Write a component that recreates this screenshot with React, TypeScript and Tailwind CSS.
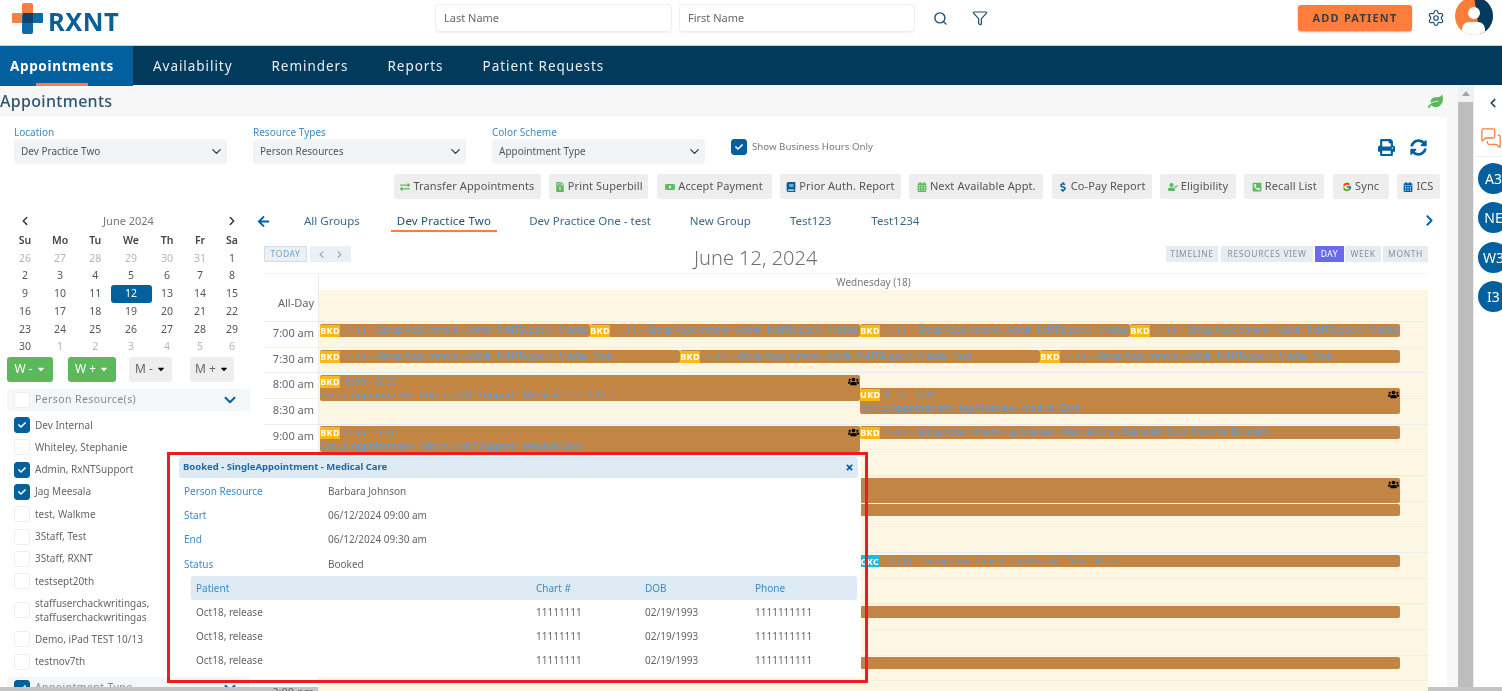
import React from "react";
import { Search, Funnel, Settings, MessagesSquare, ChevronLeft, ChevronRight, ChevronDown } from "lucide-react";
import { FaPrint, FaSyncAlt, FaLeaf, FaExchangeAlt, FaFileInvoiceDollar, FaMoneyBill, FaBook, FaCalendarAlt, FaDollarSign, FaUserCheck, FaPhoneSquareAlt, FaUsers, FaArrowLeft, FaCheck, FaTimes, FaCaretDown } from "react-icons/fa";
import { FcGoogle } from "react-icons/fc";

const Check = ({ on = true, cls = "" }: { on?: boolean; cls?: string }) => (
  <span className={`flex h-[16px] w-[16px] shrink-0 items-center justify-center rounded-[3px] border ${on ? "border-[#03609f] bg-[#03609f]" : "border-[#eeeeee] bg-white"} ${cls}`}>
    {on && <FaCheck className="text-[8px] text-white" />}
  </span>
);

const Select = ({ label, value }: { label: string; value: string }) => (
  <div className="w-[213px]">
    <div className="h-[13px] text-[10px] leading-[12px] text-[#3d8cc4]">{label}</div>
    <div className="flex h-[25px] items-center justify-between rounded-[4px] bg-[#f2f3f4] pl-[7px] pr-[3px] text-[10px] text-[#555]">
      <span>{value}</span>
      <ChevronDown size={15} className="text-[#333]" />
    </div>
  </div>
);

const tools = [
  { t: "Transfer Appointments", i: <FaExchangeAlt className="text-[#5cb85c]" />, w: "w-[147px]" },
  { t: "Print Superbill", i: <FaFileInvoiceDollar className="text-[#5cb85c]" />, w: "w-[99px]" },
  { t: "Accept Payment", i: <FaMoneyBill className="text-[#5cb85c]" />, w: "w-[115px]" },
  { t: "Prior Auth. Report", i: <FaBook className="text-[#03609f]" />, w: "w-[121px]" },
  { t: "Next Available Appt.", i: <FaCalendarAlt className="text-[#5cb85c]" />, w: "w-[134px]" },
  { t: "Co-Pay Report", i: <FaDollarSign className="text-[#03609f]" />, w: "w-[100px]" },
  { t: "Eligibility", i: <FaUserCheck className="text-[#5cb85c]" />, w: "w-[76px]" },
  { t: "Recall List", i: <FaPhoneSquareAlt className="text-[#5cb85c]" />, w: "w-[80px]" },
  { t: "Sync", i: <FcGoogle />, w: "w-[56px]" },
  { t: "ICS", i: <FaCalendarAlt className="text-[#03609f]" />, w: "w-[43px]" },
];

const days = [
  ["26", "27", "28", "29", "30", "31", "1"],
  ["2", "3", "4", "5", "6", "7", "8"],
  ["9", "10", "11", "12", "13", "14", "15"],
  ["16", "17", "18", "19", "20", "21", "22"],
  ["23", "24", "25", "26", "27", "28", "29"],
  ["30", "1", "2", "3", "4", "5", "6"],
];

const people: [string, boolean][] = [
  ["Dev Internal", true],
  ["Whiteley, Stephanie", false],
  ["Admin, RxNTSupport", true],
  ["Jag Meesala", true],
  ["test, Walkme", false],
  ["3Staff, Test", false],
  ["3Staff, RXNT", false],
  ["testsept20th", false],
];

const times = ["7:00 am", "7:30 am", "8:00 am", "8:30 am", "9:00 am", "9:30 am", "10:00 am", "10:30 am", "11:00 am", "11:30 am", "12:00 pm", "12:30 pm", "1:00 pm", "1:30 pm", "2:00 pm"];
const strong = [0, 2, 4, 6, 9, 11, 13];

const Badge = ({ t, c = "bg-[#fdb913]" }: { t: string; c?: string }) => (
  <span className={`mr-[5px] inline-block h-[12px] w-[20px] shrink-0 rounded-[1px] text-center text-[9px] font-bold leading-[12px] tracking-[0.4px] text-white ${c}`}>{t}</span>
);

const Ev = ({ cls, children }: { cls: string; children?: React.ReactNode }) => (
  <div className={`absolute overflow-hidden whitespace-nowrap rounded-[2px] bg-[#c38543] text-[9.7px] leading-[13px] text-[#5f9bd6] ${cls}`}>{children}</div>
);

const Line = ({ b = "BKD", c, time, text }: { b?: string; c?: string; time: string; text?: string }) => (
  <div className="flex h-[13px] items-center">
    <Badge t={b} c={c} />
    <span className="text-[9.5px] tracking-[0.6px]">{time}</span>
    {text && <span className="ml-[4px] text-[8.7px]">-</span>}
    {text && <span className="ml-[4px] text-[8.7px]">{text}</span>}
  </div>
);

const rows = [
  ["Person Resource", "Barbara Johnson"],
  ["Start", "06/12/2024 09:00 am"],
  ["End", "06/12/2024 09:30 am"],
  ["Status", "Booked"],
];

export default function App() {
  return (
    <div className="relative flex h-[691px] w-[1502px] flex-col overflow-hidden bg-white font-['Lato','Noto_Sans',sans-serif] text-[#555] blur-[0.35px]">
      {/* header */}
      <header className="relative flex h-[45px] shrink-0 items-center">
        <div className="ml-[12px] flex items-center">
          <svg width="31" height="31" viewBox="0 0 31 31" className="-mt-[9px]">
            <rect x="10" y="0" width="11" height="20" rx="2" fill="#f6803c" />
            <rect x="0" y="10" width="20" height="10" rx="1" fill="#f6803c" />
            <rect x="11" y="10" width="20" height="10" rx="1" fill="#0c6aa6" />
            <rect x="10" y="11" width="11" height="20" rx="2" fill="#0c6aa6" />
            <rect x="11" y="10" width="10" height="10" fill="#10406b" />
          </svg>
          <span className="ml-[5px] -mt-[2px] text-[25.5px] font-bold leading-none tracking-[0.5px] text-[#0c5f96] font-['Open_Sans',sans-serif]">RXNT</span>
        </div>
        <div className="absolute left-[435px] top-[4px] flex items-center gap-[7px]">
          <div className="flex h-[28px] w-[237px] items-center rounded-[4px] border border-[#efefef] pl-[8px] text-[11px] text-[#666] shadow-[0_1px_1px_rgba(0,0,0,0.06)]">Last Name</div>
          <div className="flex h-[28px] w-[236px] items-center rounded-[4px] border border-[#efefef] pl-[8px] text-[11px] text-[#666] shadow-[0_1px_1px_rgba(0,0,0,0.06)]">First Name</div>
          <Search size={15} strokeWidth={2.2} className="ml-[11px] text-[#1d4f70]" />
          <Funnel size={16} strokeWidth={1.8} className="ml-[17px] text-[#1d4f70]" />
        </div>
        <button className="absolute left-[1298px] top-[5px] h-[26px] w-[114px] rounded-[3px] bg-[#fe7d3a] text-[11px] font-bold tracking-[1.2px] text-[#3d3d3d] shadow-[0_1px_2px_rgba(0,0,0,0.3)]">ADD PATIENT</button>
        <Settings size={18} strokeWidth={1.6} className="absolute left-[1427px] top-[9px] text-[#1d4f70]" />
        <svg width="38" height="36" viewBox="0 0 38 36" className="absolute left-[1455px] top-0">
          <defs><clipPath id="cp"><circle cx="19" cy="16" r="19" /></clipPath></defs>
          <g clipPath="url(#cp)">
            <rect x="0" y="-4" width="38" height="40" fill="#fe7d3a" />
            <path d="M19 -4 h20 v40 h-14 z" fill="#023a5c" />
            <circle cx="19" cy="13" r="6" fill="#fff" />
            <rect x="7" y="22" width="23" height="16" rx="7" fill="#fff" />
          </g>
        </svg>
      </header>

      {/* nav */}
      <nav className="flex h-[40px] shrink-0 items-center border-t border-[#c5d3dc] bg-[#023a5c] pt-[2px] text-[13.5px] tracking-[0.95px] text-[#e8eef2]">
        <div className="relative -mt-[2px] flex h-[40px] w-[133px] items-center bg-[#03609f] pl-[10px] pt-[2px] font-bold tracking-[0.65px] text-white">
          Appointments
          <span className="absolute bottom-0 left-[36px] h-[3px] w-[52px] bg-[#fe7d3a]" />
        </div>
        <span className="ml-[20px]">Availability</span>
        <span className="ml-[39px]">Reminders</span>
        <span className="ml-[39px]">Reports</span>
        <span className="ml-[39px]">Patient Requests</span>
      </nav>

      {/* body */}
      <div className="flex min-h-0 flex-1">
        <div className="flex w-[1458px] shrink-0 flex-col">
          <div className="flex h-[32px] shrink-0 items-center justify-between bg-[#f7f7f7] pr-[15px] text-[16px] font-medium tracking-[0.3px] text-[#2b5570]">
            <span>Appointments</span>
            <FaLeaf className="text-[15px] text-[#5cb85c]" />
          </div>
          <div className="flex min-h-0 flex-1">
            <main className="w-[1447px] shrink-0 bg-white">
              {/* filters */}
              <div className="flex pl-[14px] pt-[9px]">
                <Select label="Location" value="Dev Practice Two" />
                <div className="ml-[26px]"><Select label="Resource Types" value="Person Resources" /></div>
                <div className="ml-[26px]"><Select label="Color Scheme" value="Appointment Type" /></div>
                <div className="ml-[26px] mt-[13px] flex h-[16px] items-center">
                  <Check />
                  <span className="ml-[5px] text-[9.7px] text-[#777]">Show Business Hours Only</span>
                </div>
                <div className="ml-auto mr-[20px] mt-[11px] flex h-[20px] items-center gap-[15px] text-[17px] text-[#03609f]">
                  <FaPrint />
                  <FaSyncAlt />
                </div>
              </div>
              {/* tools */}
              <div className="mt-[10px] flex justify-end gap-[8.35px] pr-[7px]">
                {tools.map((b) => (
                  <div key={b.t} className={`flex h-[25px] items-center justify-center gap-[3px] whitespace-nowrap rounded-[3px] bg-[#eeeeee] text-[11px] tracking-[0.1px] text-[#555] ${b.w}`}>
                    <span className="text-[10px]">{b.i}</span>
                    {b.t}
                  </div>
                ))}
              </div>

              <div className="flex">
                {/* left panel */}
                <aside className="w-[250px] shrink-0">
                  <div className="ml-[18px] mr-[11px] mt-[13px] flex h-[18px] items-center justify-between text-[11px] text-[#777]">
                    <ChevronLeft size={14} strokeWidth={2.5} className="text-[#333]" />
                    <span>June 2024</span>
                    <ChevronRight size={14} strokeWidth={2.5} className="text-[#333]" />
                  </div>
                  <div className="ml-[7.5px] mt-[2px] grid grid-cols-[35px_35px_35.5px_36px_36px_30px_34px] text-center text-[10.5px] leading-[17.7px] text-[#444]">
                    {["Su", "Mo", "Tu", "We", "Th", "Fr", "Sa"].map((d) => (
                      <div key={d} className="font-semibold">{d}</div>
                    ))}
                    {days.flatMap((r, ri) =>
                      r.map((d, ci) => {
                        const muted = (ri === 0 && ci < 6) || (ri === 5 && ci > 0);
                        const sel = d === "12";
                        const cls = sel ? "-mx-[2.5px] rounded-[3px] bg-[#03609f] text-white" : muted ? "text-[#b5b5b5]" : "text-[#555]";
                        return <div key={`${ri}-${ci}`} className={cls}>{d}</div>;
                      })
                    )}
                  </div>
                  <div className="ml-[7px] mt-[1px] flex h-[25px] text-[12px]">
                    <div className="flex w-[46px] items-center justify-center gap-[3px] rounded-[3px] bg-[#5cb85c] text-white">W - <FaCaretDown className="text-[10px]" /></div>
                    <div className="ml-[15px] flex w-[48px] items-center justify-center gap-[3px] rounded-[3px] bg-[#5cb85c] text-white">W + <FaCaretDown className="text-[10px]" /></div>
                    <div className="ml-[13px] flex w-[43px] items-center justify-center gap-[3px] rounded-[3px] bg-[#eeeeee] text-[#666]">M - <FaCaretDown className="text-[10px] text-black" /></div>
                    <div className="ml-[18px] flex w-[44px] items-center justify-center gap-[3px] rounded-[3px] bg-[#eeeeee] text-[#666]">M + <FaCaretDown className="text-[10px] text-black" /></div>
                  </div>
                  <div className="ml-[7px] mt-[7px] flex h-[22px] w-[243px] items-center rounded-[3px] bg-[#f4f7f9] pl-[7px] pr-[11px] text-[10.5px] tracking-[0.4px] text-[#888]">
                    <Check on={false} cls="bg-transparent" />
                    <span className="ml-[5px]">Person Resource(s)</span>
                    <ChevronDown size={18} strokeWidth={2.6} className="ml-auto text-[#03609f]" />
                  </div>
                  <div className="ml-[14px] mt-[3px] text-[10px] text-[#666]">
                    {people.map(([n, on]) => (
                      <div key={n} className="flex h-[22.3px] items-center gap-[5px]">
                        <Check on={on} />
                        <span>{n}</span>
                      </div>
                    ))}
                    <div className="flex h-[36px] items-center gap-[5px] leading-[14px]">
                      <Check on={false} />
                      <span>staffuserchackwritingas,<br />staffuserchackwritingas</span>
                    </div>
                    <div className="flex h-[22.3px] items-center gap-[5px]"><Check on={false} /><span>Demo, iPad TEST 10/13</span></div>
                    <div className="flex h-[22.3px] items-center gap-[5px]"><Check on={false} /><span>testnov7th</span></div>
                  </div>
                  <div className="ml-[7px] mt-[4px] flex h-[22px] w-[243px] items-center rounded-[3px] bg-[#f4f7f9] pl-[7px] pr-[11px] text-[10.5px] tracking-[0.4px] text-[#888]">
                    <Check />
                    <span className="ml-[5px]">Appointment Type</span>
                    <ChevronDown size={18} strokeWidth={2.6} className="ml-auto text-[#03609f]" />
                  </div>
                </aside>

                {/* calendar */}
                <section className="min-w-0 flex-1">
                  <div className="mt-[12px] flex h-[21px] items-start text-[11.5px] leading-[20px] text-[#3a6a8a]">
                    <FaArrowLeft className="ml-[7px] mt-[4px] text-[13px] text-[#03609f]" />
                    <span className="ml-[34px]">All Groups</span>
                    <span className="ml-[31px] h-[21px] border-b-2 border-[#fe7d3a] px-[6px] tracking-[0.2px] text-[#1f4f6f]">Dev Practice Two</span>
                    <span className="ml-[32px]">Dev Practice One - test</span>
                    <span className="ml-[39px]">New Group</span>
                    <span className="ml-[39px]">Test123</span>
                    <span className="ml-[40px]">Test1234</span>
                    <ChevronRight size={17} strokeWidth={2.6} className="ml-auto mr-[9px] mt-[1px] text-[#03609f]" />
                  </div>

                  <div className="ml-[14px] w-[1164px]">
                    <div className="mt-[14px] flex h-[16px] items-center text-[8.5px] tracking-[0.6px]">
                      <span className="flex h-[16px] w-[43px] items-center justify-center border border-[#d5dde2] bg-[#eaf0f3] text-[#6aa5cf]">TODAY</span>
                      <span className="ml-[3px] flex h-[16px] w-[41px] items-center justify-around bg-[#eaf0f3] px-[3px] text-[#666]">
                        <ChevronLeft size={11} /><ChevronRight size={11} />
                      </span>
                      <span className="ml-[343px] mt-[7px] font-['Open_Sans',sans-serif] text-[20px] font-light tracking-normal text-[#707070]">June 12, 2024</span>
                      <div className="ml-auto flex h-[16px] gap-[2px] text-[#8a9299]">
                        <span className="flex w-[52px] items-center justify-center bg-[#e6ecef]">TIMELINE</span>
                        <span className="ml-[1px] flex w-[92px] items-center justify-center bg-[#e6ecef]">RESOURCES VIEW</span>
                        <span className="flex w-[29px] items-center justify-center bg-[#6a6aef] text-white">DAY</span>
                        <span className="-ml-[1px] flex w-[36px] items-center justify-center bg-[#e6ecef]">WEEK</span>
                        <span className="flex w-[45px] items-center justify-center bg-[#e6ecef]">MONTH</span>
                      </div>
                    </div>
                    <div className="mt-[11px] flex h-[17px] border-t border-[#f3f6f8]">
                      <div className="w-[55px] shrink-0 border-r border-[#e6eef3]" />
                      <div className="flex-1 text-center text-[10px] leading-[17px] text-[#777]">Wednesday (18)</div>
                    </div>
                    <div className="flex h-[32px] border-b border-[#e6eef3]">
                      <div className="w-[55px] shrink-0 border-r border-[#e6eef3] pr-[4px] text-right text-[11px] leading-[26px] text-[#666]">All-Day</div>
                      <div className="flex-1 bg-[#fdf6e3]" />
                    </div>
                    <div className="relative">
                      {times.map((t, i) => (
                        <div key={t} className={`flex h-[25.67px] border-b ${strong.includes(i + 1) ? "border-[#e6eef3]" : "border-[#f5efe0]"}`}>
                          <div className="w-[55px] shrink-0 border-r border-[#e6eef3] pr-[4px] text-right text-[11px] leading-[22px] text-[#666]">{t}</div>
                          <div className="flex-1 bg-[#fdf6e3]" />
                        </div>
                      ))}
                      {/* events: origin x=264, y=322 */}
                      <Ev cls="left-[56px] top-[2px] h-[13px] w-[270px]"><Line time="7:00" text="Group Appointment - Admin, RxNTSupport - Medical" /></Ev>
                      <Ev cls="left-[326px] top-[2px] h-[13px] w-[270px]"><Line time="7:00" text="Group Appointment - Admin, RxNTSupport - Medical" /></Ev>
                      <Ev cls="left-[596px] top-[2px] h-[13px] w-[270px]"><Line time="7:00" text="Group Appointment - Admin, RxNTSupport - Medical" /></Ev>
                      <Ev cls="left-[866px] top-[2px] h-[13px] w-[270px]"><Line time="7:00" text="Group Appointment - Admin, RxNTSupport - Medical" /></Ev>
                      <Ev cls="left-[56px] top-[28px] h-[13px] w-[360px]"><Line time="7:30" text="Group Appointment - Admin, RxNTSupport - Medical Care" /></Ev>
                      <Ev cls="left-[416px] top-[28px] h-[13px] w-[360px]"><Line time="7:30" text="Group Appointment - Admin, RxNTSupport - Medical Care" /></Ev>
                      <Ev cls="left-[776px] top-[28px] h-[13px] w-[360px]"><Line time="7:30" text="Group Appointment - Admin, RxNTSupport - Medical Care" /></Ev>
                      <Ev cls="left-[56px] top-[53px] h-[26px] w-[540px]">
                        <Line time="8:00 - 8:30" />
                        <div>Group Appointment - Admin, RxNTSupport - Medical Care - Office</div>
                        <FaUsers className="absolute right-[1px] top-[1px] text-[11px] text-black" />
                      </Ev>
                      <Ev cls="left-[596px] top-[66px] h-[26px] w-[540px]">
                        <Line b="UKD" time="8:15 - 8:45" />
                        <div>Group Appointment - Jag Meesala - Medical Care</div>
                        <FaUsers className="absolute right-[1px] top-[1px] text-[11px] text-black" />
                      </Ev>
                      <Ev cls="left-[56px] top-[104px] h-[26px] w-[540px]">
                        <Line time="9:00 - 9:30" />
                        <div>Group Appointment - Admin, RxNTSupport - Medical Care</div>
                        <FaUsers className="absolute right-[1px] top-[1px] text-[11px] text-black" />
                      </Ev>
                      <Ev cls="left-[596px] top-[104px] h-[13px] w-[540px]"><Line time="9:00" text="Group Appointment - Jag Meesala - Medical Care - Telehealth Exam Room for Dr. Smith" /></Ev>
                      <Ev cls="left-[596px] top-[156px] h-[25px] w-[540px]"><FaUsers className="absolute right-[1px] top-[1px] text-[11px] text-black" /></Ev>
                      <Ev cls="left-[596px] top-[182px] h-[12px] w-[540px]" />
                      <Ev cls="left-[596px] top-[233px] h-[12px] w-[540px]"><Line b="CKC" c="bg-[#17c0d8]" time="11:30" text="Group Appointment - Jag Meesala - Medical Care" /></Ev>
                      <Ev cls="left-[596px] top-[284px] h-[12px] w-[540px]" />
                      <Ev cls="left-[596px] top-[335px] h-[12px] w-[540px]" />
                    </div>
                  </div>
                </section>
              </div>
            </main>
            <div className="flex-1 bg-[#f7f7f7]" />
          </div>
        </div>

        {/* scrollbar */}
        <div className="flex w-[15px] shrink-0 flex-col bg-[#f1f1f1]">
          <div className="flex h-[17px] items-center justify-center">
            <span className="h-0 w-0 border-x-[4px] border-b-[5px] border-x-transparent border-b-[#a5a5a5]" />
          </div>
          <div className="flex-1 bg-[#bdbdbd]" />
        </div>

        {/* right rail */}
        <div className="relative flex-1 overflow-hidden border-l border-[#eeeeee] bg-white">
          <ChevronLeft size={14} strokeWidth={3} className="ml-[12px] mt-[11px] text-[#1d3d52]" />
          <MessagesSquare size={22} strokeWidth={1.4} className="ml-[6px] mt-[17px] text-[#fe7d3a]" />
          <div className="mt-[7px] h-px bg-[#eeeeee]" />
          <div className="ml-[4px] mt-[6px] flex w-[40px] flex-col gap-[8.3px]">
            {["A3", "NE", "W3", "I3"].map((t) => (
              <div key={t} className="flex h-[31px] w-[31px] shrink-0 items-center justify-center rounded-full bg-[#03609f] text-[14px] text-white">{t}</div>
            ))}
          </div>
        </div>
      </div>

      <div className="h-[4px] shrink-0 bg-[#c4c4c4]" />

      {/* popover */}
      <div className="absolute left-[176px] top-[456px] h-[221px] w-[685px] rounded-[4px] bg-white text-[10px] text-[#666]">
        <div className="mx-[3px] mb-[1px] mt-[1px] flex h-[21px] items-center justify-between rounded-[3px] bg-[#deeaf3] pl-[4px] pr-[4px] text-[9.5px] font-bold text-[#1f6aa3]">
          <span>Booked - SingleAppointment - Medical Care</span>
          <FaTimes className="text-[9px] text-[#03609f]" />
        </div>
        {rows.map(([a, b]) => (
          <div key={a} className="flex h-[24.3px] items-center pl-[8px]">
            <span className="w-[144px] text-[#3d8cc4]">{a}</span>
            <span>{b}</span>
          </div>
        ))}
        <div className="ml-[15px] w-[666px]">
          <div className="grid h-[24px] grid-cols-[340px_109px_110px_1fr] items-center rounded-[3px] bg-[#deeaf3] pl-[5px] text-[#3d8cc4]">
            <span>Patient</span><span>Chart #</span><span>DOB</span><span>Phone</span>
          </div>
          {[0, 1, 2].map((i) => (
            <div key={i} className="grid h-[24.3px] grid-cols-[340px_109px_110px_1fr] items-center pl-[5px]">
              <span>Oct18, release</span><span>11111111</span><span>02/19/1993</span><span>1111111111</span>
            </div>
          ))}
        </div>
      </div>
      <div className="pointer-events-none absolute left-[167px] top-[452px] h-[231px] w-[701px] border-[3px] border-[#ed1c24]" />
    </div>
  );
}
